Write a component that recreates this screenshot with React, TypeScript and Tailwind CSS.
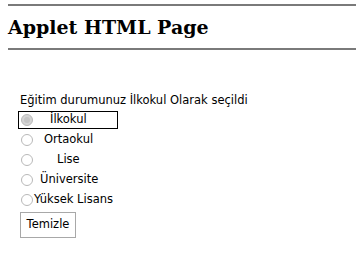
const options = [
    { label: "İlkokul", left: 50, selected: true },
    { label: "Ortaokul", left: 44, selected: false },
    { label: "Lise", left: 57, selected: false },
    { label: "Üniversite", left: 40, selected: false },
    { label: "Yüksek Lisans", left: 33, selected: false },
];

const Radio = ({ selected }: { selected: boolean }) => (
    <svg width="12" height="12" viewBox="0 0 12 12" className="shrink-0">
        <circle
            cx="6"
            cy="6"
            r="5.5"
            fill={selected ? "#d4d4d4" : "#ffffff"}
            stroke="#b8b8b8"
        />
        {selected && <circle cx="6" cy="6" r="3" fill="#c4c4c4" />}
    </svg>
);

export default function App() {
    return (
        <div className="w-[356px] h-[262px] bg-white overflow-hidden font-['DejaVu_Sans',sans-serif] text-black">
            <div className="pt-[4px] pl-[8px]">
                <div className="h-[2px] bg-[#7a7a7a]" />
                <h2 className="h-[42px] flex items-center font-['DejaVu_Serif',serif] font-bold text-[19px] leading-none">
                    Applet HTML Page
                </h2>
                <div className="h-[2px] bg-[#7a7a7a]" />
            </div>

            <div className="pt-[40px] pl-[18px]">
                <div className="pl-[2px] text-[11.5px] leading-[20px]">
                    Eğitim durumunuz İlkokul Olarak seçildi
                </div>
                <div className="flex flex-col">
                    {options.map((o, i) => (
                        <div key={o.label} className="h-[20px] flex items-center">
                            <div
                                className={
                                    i === 0
                                        ? "w-[100px] h-[18px] border border-black flex items-center pl-[2px]"
                                        : "h-[18px] flex items-center pl-[3px]"
                                }
                            >
                                <Radio selected={o.selected} />
                                <span
                                    className="text-[11.5px] leading-none"
                                    style={{ marginLeft: o.left - (i === 0 ? 33 : i === 4 ? 32 : 33) }}
                                >
                                    {o.label}
                                </span>
                            </div>
                        </div>
                    ))}
                </div>
                <button className="mt-[2px] ml-[2px] w-[56px] h-[26px] border border-[#a8a8a8] bg-white text-[11.5px] leading-none flex items-center justify-center">
                    Temizle
                </button>
            </div>
        </div>
    );
}
